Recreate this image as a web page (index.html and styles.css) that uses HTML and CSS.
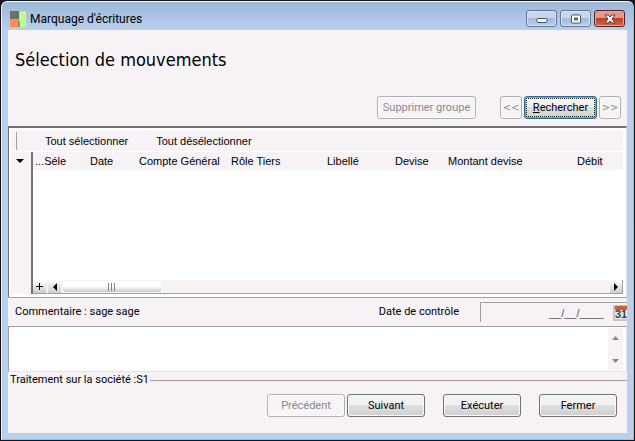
FILE: index.html
```html
<!DOCTYPE html>
<html lang="fr">
  <head>
    <meta charset="UTF-8" />
    <meta name="viewport" content="width=device-width, initial-scale=1.0" />
    <title>Marquage d'écritures</title>
    <link rel="stylesheet" href="styles.css">
  </head>
  <body>
    <div class="window">
      <header class="titlebar">
        <svg class="app-icon" width="16" height="16" viewBox="0 0 16 16">
          <rect width="9" height="8" fill="#6b7069" />
          <rect y="8" width="9" height="8" fill="#fb8d55" />
          <rect x="8" y="10" width="2" height="6" fill="#7c8e7b" />
          <path d="M9 1L16 0V16H10Z" fill="#c3fb90" />
        </svg>
        <span class="title">Marquage d'écritures</span>
        <div class="window-buttons">
          <button type="button" aria-label="Réduire">
            <svg width="12" height="10" viewBox="0 0 12 10">
              <rect x="1" y="4.5" width="10" height="4" rx="1" fill="#fff" stroke="#4c5566" />
            </svg>
          </button>
          <button type="button" aria-label="Agrandir">
            <svg width="12" height="10" viewBox="0 0 12 10">
              <rect x="1.5" y="1" width="9" height="8" rx="1" fill="#fff" stroke="#4c5566" />
              <rect x="4.5" y="4" width="3" height="2" fill="#8ba4c4" stroke="#4c5566" />
            </svg>
          </button>
          <button type="button" class="close" aria-label="Fermer la fenêtre">
            <svg width="12" height="10" viewBox="0 0 12 10">
              <path d="M1 1H4.2L6 3L7.8 1H11L8 5L11 9H7.8L6 7L4.2 9H1L4 5Z" fill="#fff" stroke="#5b3438" />
            </svg>
          </button>
        </div>
      </header>

      <main class="content">
        <h1>Sélection de mouvements</h1>

        <div class="search-bar">
          <button type="button" class="btn btn-group" disabled>Supprimer groupe</button>
          <button type="button" class="btn btn-nav" disabled>&lt;&lt;</button>
          <button type="button" class="btn btn-search"><u>R</u>echercher</button>
          <button type="button" class="btn btn-nav" disabled>&gt;&gt;</button>
        </div>

        <section class="grid">
          <div class="grid-tools">
            <button type="button">Tout sélectionner</button>
            <button type="button">Tout désélectionner</button>
          </div>
          <div class="grid-body">
            <div class="gutter">
              <button type="button" aria-label="Options">
                <svg width="8" height="4" viewBox="0 0 8 4"><path d="M0 0H8L4 4Z" /></svg>
              </button>
            </div>
            <div class="grid-data">
              <table>
                <colgroup>
                  <col class="col-sel">
                  <col class="col-date">
                  <col class="col-compte">
                  <col class="col-role">
                  <col class="col-libelle">
                  <col class="col-devise">
                  <col class="col-montant">
                  <col>
                </colgroup>
                <thead>
                  <tr>
                    <th>...Séle</th>
                    <th>Date</th>
                    <th>Compte Général</th>
                    <th>Rôle Tiers</th>
                    <th>Libellé</th>
                    <th>Devise</th>
                    <th>Montant devise</th>
                    <th>Débit</th>
                  </tr>
                </thead>
              </table>
              <div class="h-scroll">
                <button type="button" aria-label="Ajouter">
                  <svg width="7" height="7" viewBox="0 0 7 7"><path d="M3 0H4V3H7V4H4V7H3V4H0V3H3Z" /></svg>
                </button>
                <button type="button" aria-label="Gauche">
                  <svg width="4" height="8" viewBox="0 0 4 8"><path d="M4 0V8L0 4Z" /></svg>
                </button>
                <div class="thumb">
                  <svg width="8" height="8" viewBox="0 0 8 8"><path d="M0 0H1V8H0ZM3 0H4V8H3ZM6 0H7V8H6Z" fill="#858285" /></svg>
                </div>
                <button type="button" class="scroll-right" aria-label="Droite">
                  <svg width="4" height="8" viewBox="0 0 4 8"><path d="M0 0V8L4 4Z" /></svg>
                </button>
              </div>
            </div>
          </div>
        </section>

        <div class="comment-bar">
          <label for="commentaire">Commentaire : sage sage</label>
          <label for="date-controle" class="date-label">Date de contrôle</label>
          <div class="date-field">
            <input type="text" id="date-controle" value="__/__/____" />
            <button type="button" aria-label="Calendrier">
              <svg width="14" height="16" viewBox="0 0 14 16">
                <rect x="0" y="0" width="18" height="16" rx="1" fill="#c9c4c2" />
                <rect x="2" y="1" width="16" height="4" fill="#d45a3c" />
                <rect x="2" y="5" width="16" height="9" fill="#ebe8e6" />
                <text x="2" y="13">31</text>
              </svg>
            </button>
          </div>
        </div>

        <div class="comment-box">
          <textarea id="commentaire"></textarea>
          <div class="v-scroll">
            <svg width="7" height="4" viewBox="0 0 7 4"><path d="M0 4H7L3.5 0Z" /></svg>
            <svg width="7" height="4" viewBox="0 0 7 4"><path d="M0 0H7L3.5 4Z" /></svg>
          </div>
        </div>

        <fieldset>
          <legend>Traitement sur la société :S1</legend>
          <div class="actions">
            <button type="button" class="btn" disabled>Précédent</button>
            <button type="button" class="btn">Suivant</button>
            <button type="button" class="btn btn-apart">Exécuter</button>
            <button type="button" class="btn btn-apart">Fermer</button>
          </div>
        </fieldset>
      </main>
    </div>
  </body>
</html>
```
FILE: styles.css
```css
:root {
  --face: #f6f2f6;
  --frame: #bad1ee;
  --line: #a19da1;
  --dark: #736f73;
  --ui: Tahoma, "DejaVu Sans Condensed", Roboto, sans-serif;
  --small: Roboto, "Open Sans", sans-serif;
  --grid: "Liberation Sans", Arial, sans-serif;
}

* {
  box-sizing: border-box;
}

body {
  margin: 0;
  padding: 1px;
  min-height: 100vh;
  display: flex;
  background: #17151a;
  font: 11px/14px var(--small);
  color: #000;
}

button,
input,
textarea {
  font: inherit;
  color: inherit;
  margin: 0;
}

svg {
  display: block;
}

.window {
  flex: 1;
  min-width: 0;
  display: flex;
  flex-direction: column;
  padding: 0 6px 6px;
  border: 1px solid #5fd9f0;
  border-top-color: #f2f7fc;
  border-left-color: #e2effb;
  border-radius: 6px 6px 0 0;
  background: linear-gradient(#9db7d6, #b9d0ed 28px, var(--frame));
}

/* title bar */
.titlebar {
  display: flex;
  align-items: center;
  height: 28px;
  padding: 5px 2px 0;
}

.title {
  flex: 1;
  margin-left: 4px;
  font-size: 12px;
}

.window-buttons {
  display: flex;
  gap: 3px;
}

.window-buttons button {
  width: 31px;
  height: 17px;
  padding: 0;
  display: flex;
  align-items: center;
  justify-content: center;
  border: 1px solid #5f7796;
  border-radius: 3px;
  background: linear-gradient(#c6d7eb 50%, #a2bad7 50%, #b9cfe8);
  box-shadow: inset 0 0 0 1px #d6e4f3;
}

.window-buttons .close {
  border-color: #56202a;
  background: linear-gradient(#dd9a8d 45%, #bb3a25 45%, #cf6a4c);
  box-shadow: inset 0 0 0 1px #e3a99e;
}

/* client area */
.content {
  flex: 1;
  min-width: 0;
  display: flex;
  flex-direction: column;
  background: var(--face);
}

h1 {
  margin: 0;
  padding: 18px 7px 0;
  font: 400 18px/24px var(--ui);
}

.btn {
  width: 78px;
  height: 23px;
  padding: 0;
  border: 1px solid #727072;
  border-radius: 3px;
  background: linear-gradient(#f3f2f3 50%, #e0dfe0 50%, #d0cfd0);
  box-shadow: inset 0 0 0 1px #fbfafb;
}

.btn:disabled {
  color: #8b888b;
  border-color: #b3b0b3;
  background: #f7f4f7;
}

.search-bar {
  display: flex;
  justify-content: flex-end;
  gap: 2px;
  padding: 24px 6px 7px;
}

.search-bar .btn-group {
  width: 99px;
  margin-right: 22px;
}

.search-bar .btn-nav {
  width: 22px;
  font-family: var(--ui);
}

.search-bar .btn-search {
  width: 73px;
  border-color: #2b6d93;
  box-shadow: inset 0 0 0 1px #43b8e0;
  outline: 1px dotted #222;
  outline-offset: -3px;
}

/* grid */
.grid {
  flex: 1;
  display: flex;
  flex-direction: column;
  padding: 2px 3px 3px 2px;
  border-top: 2px solid var(--dark);
  border-left: 1px solid var(--dark);
  border-right: 1px solid #e4e0e4;
  background: #fff;
  font-family: var(--grid);
}

.grid-tools {
  display: flex;
  gap: 28px;
  height: 21px;
  margin-bottom: 1px;
  padding-left: 5px;
  background: var(--face);
}

.grid-tools::before {
  content: "";
  width: 1px;
  margin: 2px 0 1px;
  background: var(--line);
}

.grid-tools button {
  padding: 0;
  border: 0;
  background: none;
}

.grid-body {
  flex: 1;
  display: flex;
}

.gutter {
  width: 20px;
  background: var(--face);
}

.gutter button {
  display: block;
  padding: 7px 5px;
  border: 0;
  background: none;
}

.grid-data {
  flex: 1;
  min-width: 0;
  display: flex;
  flex-direction: column;
  justify-content: space-between;
  border-left: 2px solid var(--dark);
}

table {
  width: 100%;
  table-layout: fixed;
  border-collapse: collapse;
}

th {
  height: 18px;
  padding: 0 0 0 2px;
  background: var(--face);
  font-weight: 400;
  text-align: left;
  white-space: nowrap;
}

.col-sel { width: 55px; }
.col-date { width: 49px; }
.col-compte { width: 92px; }
.col-role { width: 96px; }
.col-libelle { width: 68px; }
.col-devise { width: 53px; }
.col-montant { width: 129px; }

.h-scroll {
  display: flex;
  gap: 2px;
  height: 14px;
  border-bottom: 1px solid var(--line);
  background: var(--face);
}

.h-scroll button {
  width: 13px;
  padding: 0;
  display: flex;
  align-items: center;
  justify-content: center;
  border: 0;
  background: linear-gradient(#fff, #cfcccf);
}

.h-scroll .thumb {
  width: 98px;
  margin: 1px 0;
  display: flex;
  align-items: center;
  justify-content: center;
  border-radius: 3px;
  background: linear-gradient(#fff 50%, #c9c6c9);
}

.h-scroll .scroll-right {
  margin-left: auto;
  border-right: 1px solid var(--line);
}

/* comment */
.comment-bar {
  display: flex;
  align-items: center;
  height: 30px;
  padding-left: 7px;
  border-top: 1px solid var(--line);
  border-bottom: 1px solid var(--line);
}

.date-label {
  margin-left: auto;
}

.date-field {
  display: flex;
  align-items: center;
  width: 147px;
  height: 20px;
  margin-left: 21px;
  border-top: 1px solid var(--line);
  border-left: 1px solid var(--line);
}

.date-field input {
  flex: 1;
  min-width: 0;
  padding: 0 9px 0 0;
  border: 0;
  background: none;
  color: #555;
  font-family: var(--grid);
  text-align: right;
}

.date-field button {
  padding: 0;
  border: 0;
  background: none;
}

.date-field text {
  font: bold 11px "Liberation Sans", Arial, sans-serif;
  fill: #3f3c3f;
}

.comment-box {
  display: flex;
  height: 45px;
  padding-right: 3px;
  border-left: 1px solid var(--line);
  border-right: 1px solid #e4e0e4;
  border-bottom: 1px solid #e4e0e4;
  background: #fff;
}

.comment-box textarea {
  flex: 1;
  padding: 2px 4px;
  border: 0;
  outline: 0;
  resize: none;
  background: none;
}

.v-scroll {
  display: flex;
  flex-direction: column;
  align-items: center;
  justify-content: space-between;
  width: 15px;
  margin: 1px 0;
  padding: 8px 0 7px;
  background: var(--face);
  fill: #8a878a;
}

/* footer */
fieldset {
  min-width: 0;
  margin: 1px 0 0;
  padding: 0;
  border: 0;
  border-top: 1px solid var(--line);
}

legend {
  padding: 0 1px 0 2px;
}

.actions {
  display: flex;
  justify-content: flex-end;
  gap: 2px;
  padding: 7px 10px 16px;
}

.actions .btn-apart {
  margin-left: 16px;
}
```
